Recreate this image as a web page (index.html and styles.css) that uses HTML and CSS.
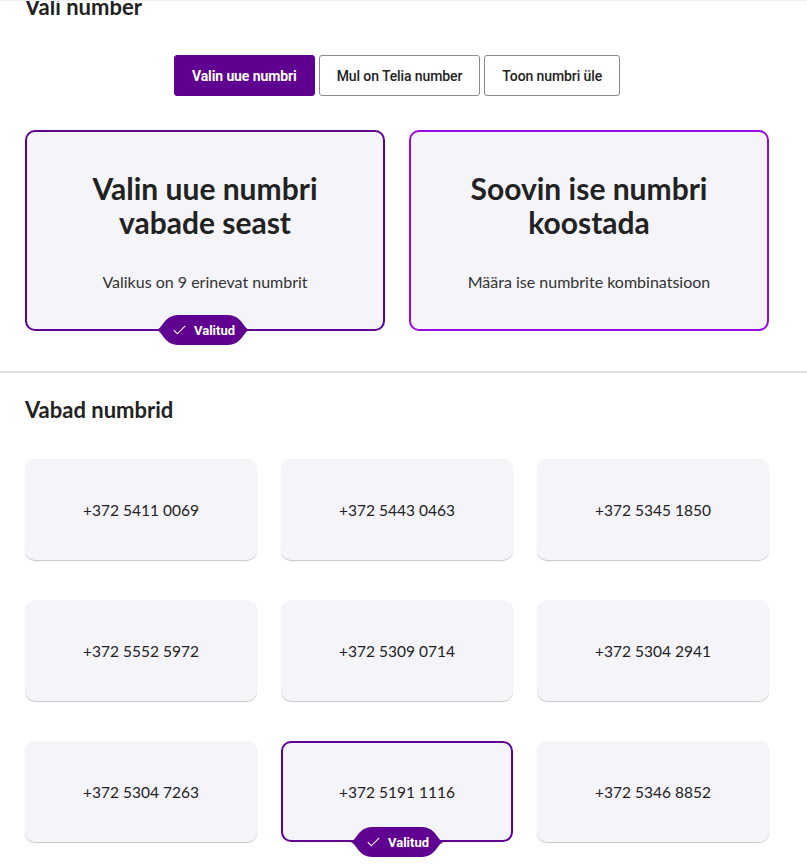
FILE: index.html
```html
<!DOCTYPE html>
<html lang="et">
<head>
<meta charset="utf-8">
<title>Vali number</title>
<link rel="stylesheet" href="styles.css">
</head>
<body>
<div class="page">
  <section class="top">
    <h1 class="title">Vali number</h1>
    <div class="tabs">
      <button class="tab active">Valin uue numbri</button>
      <button class="tab">Mul on Telia number</button>
      <button class="tab">Toon numbri üle</button>
    </div>
    <div class="options">
      <div class="option selected">
        <div class="opt-title">Valin uue numbri<br>vabade seast</div>
        <div class="opt-sub">Valikus on 9 erinevat numbrit</div>
        <div class="badge">
          <svg class="badge-bg" width="94" height="30" viewBox="0 0 94 30"><path d="M0,15 C6,15 8,0 22,0 L72,0 C86,0 88,15 94,15 C88,15 86,30 72,30 L22,30 C8,30 6,15 0,15 Z" fill="#5f0091"/></svg>
          <span class="badge-inner"><svg class="check" width="13" height="10" viewBox="0 0 13 10"><path d="M0.8,5.2 L4.4,8.8 L12.2,0.8" fill="none" stroke="#fff" stroke-width="1.1"/></svg>Valitud</span>
        </div>
      </div>
      <div class="option hover">
        <div class="opt-title">Soovin ise numbri<br>koostada</div>
        <div class="opt-sub">Määra ise numbrite kombinatsioon</div>
      </div>
    </div>
  </section>
  <hr class="divider">
  <section class="bottom">
    <h2 class="subtitle">Vabad numbrid</h2>
    <div class="numbers">
      <div class="num">+372 5411 0069</div>
      <div class="num">+372 5443 0463</div>
      <div class="num">+372 5345 1850</div>
      <div class="num">+372 5552 5972</div>
      <div class="num">+372 5309 0714</div>
      <div class="num">+372 5304 2941</div>
      <div class="num">+372 5304 7263</div>
      <div class="num selected">+372 5191 1116
        <div class="badge">
          <svg class="badge-bg" width="94" height="30" viewBox="0 0 94 30"><path d="M0,15 C6,15 8,0 22,0 L72,0 C86,0 88,15 94,15 C88,15 86,30 72,30 L22,30 C8,30 6,15 0,15 Z" fill="#5f0091"/></svg>
          <span class="badge-inner"><svg class="check" width="13" height="10" viewBox="0 0 13 10"><path d="M0.8,5.2 L4.4,8.8 L12.2,0.8" fill="none" stroke="#fff" stroke-width="1.1"/></svg>Valitud</span>
        </div>
      </div>
      <div class="num">+372 5346 8852</div>
    </div>
  </section>
</div>
</body>
</html>
```
FILE: styles.css
```css
* { box-sizing: border-box; }
html, body { margin: 0; padding: 0; background: #fff; }
body {
  font-family: "Lato", "Noto Sans", sans-serif;
  color: #222;
  border-top: 1px solid #f0f0f0;
}
.page { width: 807px; padding-bottom: 40px; }
.top { padding: 0 38px 0 25px; }
.title {
  margin: -7px 0 0;
  font-size: 22px;
  line-height: 26px;
  font-weight: 700;
  color: #222;
}
.tabs {
  display: flex;
  justify-content: center;
  gap: 4px;
  margin-top: 35px;
}
.tab {
  height: 41px;
  padding: 0 17px;
  border: 1px solid #8c8c8c;
  border-radius: 3px;
  background: #fff;
  font-family: "Roboto", "Liberation Sans", sans-serif;
  font-size: 14px;
  font-weight: 500;
  color: #222;
  letter-spacing: -0.1px;
}
.tab.active {
  background: #5f0091;
  border-color: #5f0091;
  color: #fff;
  font-weight: 700;
}
.options {
  display: grid;
  grid-template-columns: 1fr 1fr;
  gap: 24px;
  margin-top: 34px;
}
.option {
  position: relative;
  height: 201px;
  background: #f4f4f9;
  border: 2px solid #5f0091;
  border-radius: 10px;
  padding: 39px 16px 0;
  text-align: center;
}
.option.hover { border-color: #990ae3; }
.opt-title {
  font-size: 30px;
  line-height: 34px;
  font-weight: 700;
  color: #222;
}
.opt-sub {
  margin-top: 33px;
  font-size: 16px;
  line-height: 20px;
  color: #333;
}
.badge {
  position: absolute;
  left: 50%;
  bottom: -16px;
  width: 94px;
  height: 30px;
  margin-left: -47px;
}
.option .badge { margin-left: -49px; }
.badge-bg { position: absolute; left: 0; top: 0; }
.badge-inner {
  position: relative;
  display: flex;
  align-items: center;
  justify-content: center;
  gap: 8px;
  height: 30px;
  padding-left: 2px;
  color: #fff;
  font-family: "Roboto", "Liberation Sans", sans-serif;
  font-size: 13px;
  font-weight: 700;
}
.check { display: block; }
.divider {
  margin: 40px 0 0;
  border: 0;
  height: 2px;
  background: #e0e0e0;
}
.bottom { padding: 0 38px 0 25px; }
.subtitle {
  margin: 24px 0 0;
  font-size: 22px;
  line-height: 26px;
  font-weight: 700;
  color: #222;
}
.numbers {
  display: grid;
  grid-template-columns: repeat(3, 232px);
  column-gap: 24px;
  row-gap: 40px;
  margin-top: 36px;
}
.num {
  position: relative;
  height: 101px;
  background: #f4f4f9;
  border-radius: 10px;
  box-shadow: 0 1px 1px rgba(0,0,0,0.22);
  display: flex;
  align-items: center;
  justify-content: center;
  font-size: 15.5px;
  color: #222;
}
.num.selected {
  border: 2px solid #5f0091;
  box-shadow: none;
}
.num .badge { bottom: -17px; }
```
